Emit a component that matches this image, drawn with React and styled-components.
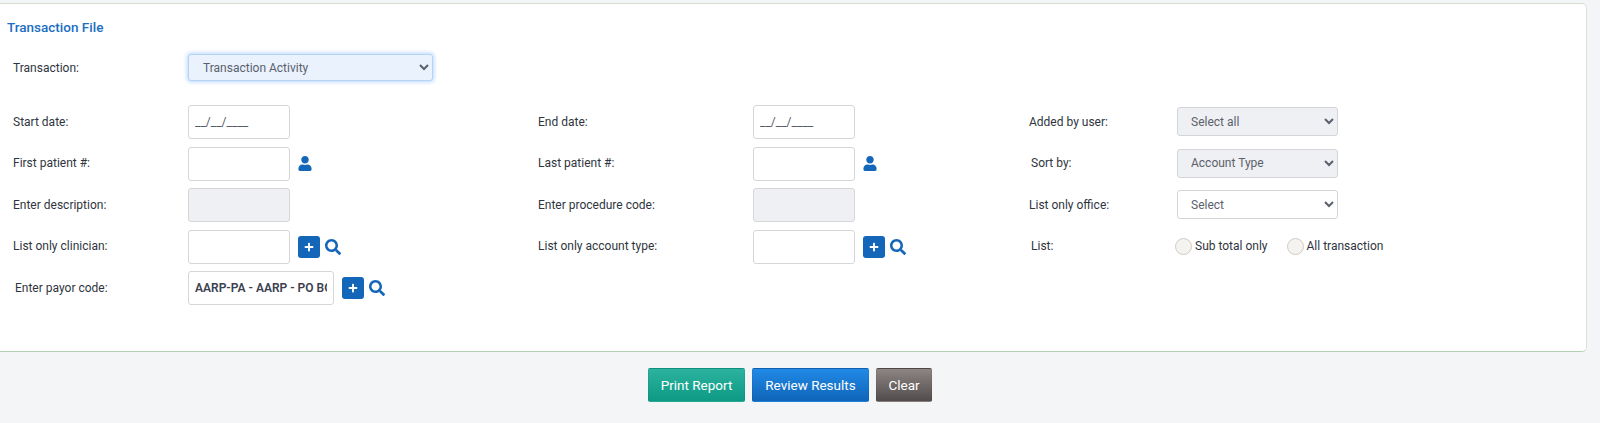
import React from "react";
import styled, { createGlobalStyle } from "styled-components";
import { FaUser, FaSearch, FaPlus } from "react-icons/fa";

const GlobalStyle = createGlobalStyle`
  html, body {
    margin: 0;
    padding: 0;
    background: #f4f5f7;
    font-family: Roboto, "Liberation Sans", sans-serif;
    overflow: hidden;
  }
`;

const Page = styled.div`
  height: 423px;
  padding-top: 3px;
  box-sizing: border-box;
`;

const Card = styled.section`
  width: 1588px;
  height: 349px;
  margin-left: -1px;
  box-sizing: border-box;
  background: #fff;
  border: 1px solid #b4d0b4;
  border-top-color: #d5dfd5;
  border-right-color: #d5e6d5;
  border-radius: 0 5px 5px 0;
  padding: 15px 0 0 0;
`;

const Title = styled.h2`
  margin: 0 0 0 7px;
  font-size: 13.5px;
  line-height: 16px;
  font-weight: 500;
  color: #1b6ec2;
`;

const TransactionRow = styled.div`
  display: grid;
  grid-template-columns: 175px 245px;
  align-items: center;
  height: 27px;
  margin: 19px 0 24px 13px;
`;

const FormGrid = styled.div`
  display: grid;
  grid-template-columns: 175px 350px 215px 275px 149px 240px;
  grid-auto-rows: 41.5px;
  margin-left: 13px;
`;

const Label = styled.label`
  align-self: center;
  font-size: 12px;
  line-height: 14px;
  color: #2f3540;
  padding-left: ${props => props.$indent || 0}px;
  margin-top: ${props => props.$lift || -8}px;
`;

const Control = styled.div`
  display: flex;
  align-items: flex-start;
`;

const TextInput = styled.input`
  width: ${props => props.$wide ? 146 : 102}px;
  height: 34px;
  box-sizing: border-box;
  padding: 0 6px;
  border: 1px solid #d6d6d8;
  border-radius: 3px;
  background: ${props => props.disabled ? "#eff0f3" : "#fff"};
  font-family: inherit;
  font-size: 12px;
  font-weight: ${props => props.$wide ? 600 : 400};
  color: #3c4150;
  outline: none;

  &::placeholder {
    color: #555b66;
    opacity: 1;
  }
`;

const Select = styled.select`
  width: 161px;
  height: 29px;
  box-sizing: border-box;
  margin-top: 2px;
  padding: 0 0 0 9px;
  border: 1px solid #d3d5d9;
  border-radius: 3px;
  background-color: ${props => props.$muted ? "#eff0f3" : "#fff"};
  font-family: inherit;
  font-size: 12px;
  color: #5b616c;
  outline: none;
`;

const MainSelect = styled(Select)`
  width: 245px;
  height: 27px;
  margin: 0;
  padding-left: 10px;
  background-color: #e9f2fd;
  border-color: #b5d3f7;
  box-shadow: 0 0 4px 1px #b9d6fa;
`;

const PersonIcon = styled(FaUser)`
  width: 14px;
  height: 15px;
  margin: 9px 0 0 8px;
  color: #1466b8;
`;

const AddButton = styled.button`
  width: 22px;
  height: 22px;
  margin: 6px 0 0 8px;
  padding: 0;
  display: flex;
  align-items: center;
  justify-content: center;
  border: 0;
  border-radius: 3px;
  background: #1466b8;
  color: #fff;
  font-size: 10px;
`;

const SearchIcon = styled(FaSearch)`
  width: 16px;
  height: 16px;
  margin: 9px 0 0 5px;
  color: #1466b8;
`;

const RadioGroup = styled.div`
  display: flex;
  align-items: center;
  height: 33px;
  margin-left: -2px;
`;

const RadioLabel = styled.label`
  display: flex;
  align-items: center;
  font-size: 12px;
  color: #2f3540;
  margin-right: 19px;
`;

const Radio = styled.input`
  appearance: none;
  width: 17px;
  height: 17px;
  margin: 1px 3px 0 0;
  border: 1px solid #cfcbc4;
  border-radius: 50%;
  background: #f4f3f0;
`;

const Actions = styled.div`
  display: flex;
  justify-content: center;
  gap: 7px;
  margin-top: 16px;
  padding-right: 20px;
`;

const tones = {
  teal: "linear-gradient(#2cb29f, #0d9a85)",
  blue: "linear-gradient(#2189e6, #0f65b8)",
  grey: "linear-gradient(#8d8583, #524c4c)",
};

const ActionButton = styled.button`
  height: 34px;
  width: ${props => props.$width}px;
  padding: 0;
  border: 1px solid rgba(0, 0, 0, 0.06);
  border-radius: 2px;
  background: ${props => tones[props.$tone]};
  color: #fff;
  font-family: inherit;
  font-size: 13.5px;
`;

const DateField = () => <TextInput placeholder="__/__/____" />;

const Lookup = () => (
  <>
    <AddButton type="button"><FaPlus /></AddButton>
    <SearchIcon />
  </>
);

export default function App() {
  return (
    <Page>
      <GlobalStyle />
      <Card>
        <Title>Transaction File</Title>
        <TransactionRow>
          <Label $lift={1}>Transaction:</Label>
          <MainSelect defaultValue="Transaction Activity">
            <option>Transaction Activity</option>
          </MainSelect>
        </TransactionRow>
        <FormGrid>
          <Label $lift={-7}>Start date:</Label>
          <Control><DateField /></Control>
          <Label $lift={-7}>End date:</Label>
          <Control><DateField /></Control>
          <Label $lift={-7} $indent={1}>Added by user:</Label>
          <Control>
            <Select $muted><option>Select all</option></Select>
          </Control>

          <Label>First patient #:</Label>
          <Control><TextInput /><PersonIcon /></Control>
          <Label>Last patient #:</Label>
          <Control><TextInput /><PersonIcon /></Control>
          <Label $indent={3}>Sort by:</Label>
          <Control>
            <Select $muted><option>Account Type</option></Select>
          </Control>

          <Label>Enter description:</Label>
          <Control><TextInput disabled /></Control>
          <Label>Enter procedure code:</Label>
          <Control><TextInput disabled /></Control>
          <Label $indent={1}>List only office:</Label>
          <Control>
            <Select><option>Select</option></Select>
          </Control>

          <Label>List only clinician:</Label>
          <Control><TextInput /><Lookup /></Control>
          <Label>List only account type:</Label>
          <Control><TextInput /><Lookup /></Control>
          <Label $indent={3}>List:</Label>
          <RadioGroup>
            <RadioLabel><Radio type="radio" name="list" />Sub total only</RadioLabel>
            <RadioLabel><Radio type="radio" name="list" />All transaction</RadioLabel>
          </RadioGroup>

          <Label $indent={2}>Enter payor code:</Label>
          <Control>
            <TextInput $wide defaultValue="AARP-PA - AARP - PO BOX 1017" />
            <Lookup />
          </Control>
        </FormGrid>
      </Card>
      <Actions>
        <ActionButton $tone="teal" $width={97}>Print Report</ActionButton>
        <ActionButton $tone="blue" $width={117}>Review Results</ActionButton>
        <ActionButton $tone="grey" $width={56}>Clear</ActionButton>
      </Actions>
    </Page>
  );
}
